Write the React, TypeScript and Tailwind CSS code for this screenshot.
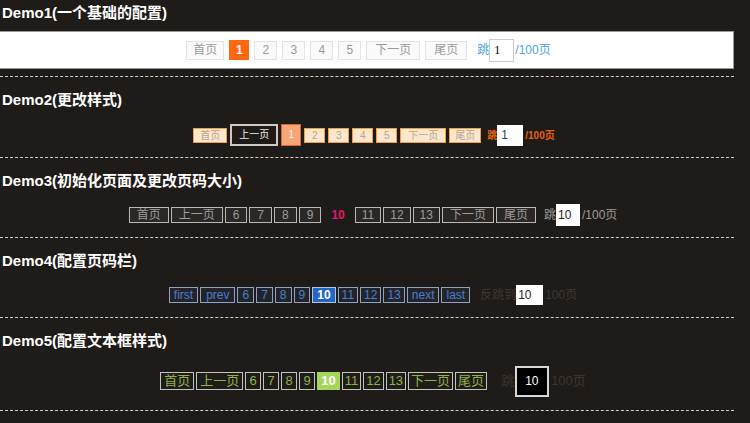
import React from 'react';

const nums1 = ['2', '3', '4', '5'];
const nums3 = ['6', '7', '8', '9'];
const nums3b = ['11', '12', '13'];

function Title({ children }: { children: React.ReactNode }) {
  return <h2 className="h-[20px] leading-[20px] pl-[2px] text-[15px] font-bold text-white">{children}</h2>;
}

export default function App() {
  return (
    <div className="min-h-screen bg-[#1f1b18] font-['Liberation_Sans','Noto_Sans_CJK_SC',sans-serif]">
      <div className="w-[734px]">
        {/* Demo1 */}
        <section className="pt-[3px] pb-[7px] border-b border-dashed border-[#cfcfcf]">
          <Title>Demo1(一个基础的配置)</Title>
          <div className="mt-[8px] h-[38px] bg-white border border-[#9a9a9a] border-l-0 flex items-center justify-center text-[12px] text-[#9a9a9a]">
            <div className="flex items-center gap-[5px] pl-[4px]">
              <span className="h-[19px] leading-[17px] px-[6px] border border-[#e4e4e4] bg-[#fafafa]">首页</span>
              <span className="h-[20px] leading-[20px] w-[20px] text-center bg-[#ff660f] text-white font-bold">1</span>
              {nums1.map((n) => (
                <span key={n} className="h-[19px] leading-[17px] w-[23px] text-center border border-[#e4e4e4] bg-[#fafafa]">{n}</span>
              ))}
              <span className="h-[19px] leading-[17px] px-[8px] border border-[#e4e4e4] bg-[#fafafa]">下一页</span>
              <span className="h-[19px] leading-[17px] px-[8px] border border-[#e4e4e4] bg-[#fafafa]">尾页</span>
              <div className="ml-[5px] flex items-center text-[#4ba5dc]">
                <span>跳</span>
                <span className="h-[23px] w-[25px] border border-[#cccccc] bg-white pl-[4px] leading-[21px] text-[12px] text-black font-['Liberation_Serif',serif]">1</span>
                <span className="ml-[1px]">/100页</span>
              </div>
            </div>
          </div>
        </section>

        {/* Demo2 */}
        <section className="pt-[13px] pb-[11px] border-b border-dashed border-[#cfcfcf]">
          <Title>Demo2(更改样式)</Title>
          <div className="mt-[14px] h-[22px] pl-[14px] flex items-center justify-center text-[10px]">
            <div className="flex items-center gap-[3px]">
              <span className="h-[15px] leading-[13px] px-[6px] border border-[#f1a04a] bg-[#fde6c9] text-[#b3a597]">首页</span>
              <span className="h-[22px] leading-[18px] px-[7px] border-2 border-[#cfcac4] bg-[#1f1b18] text-[#f0ece8]">上一页</span>
              <span className="h-[22px] leading-[20px] w-[20px] text-center border border-[#d9672c] bg-[#f7a67a] text-[#fff3ea]">1</span>
              {nums1.map((n) => (
                <span key={n} className="h-[15px] leading-[13px] w-[21px] text-center border border-[#f1a04a] bg-[#fde6c9] text-[#b3a597]">{n}</span>
              ))}
              <span className="h-[15px] leading-[13px] px-[7px] border border-[#f1a04a] bg-[#fde6c9] text-[#b3a597]">下一页</span>
              <span className="h-[15px] leading-[13px] px-[5px] border border-[#f1a04a] bg-[#fde6c9] text-[#b3a597]">尾页</span>
              <div className="ml-[3px] flex items-center text-[#e8620f] font-bold">
                <span>跳</span>
                <span className="h-[21px] w-[26px] bg-white pl-[4px] leading-[21px] text-[12px] font-normal text-[#333d55]">1</span>
                <span className="ml-[2px] text-[10px]">/100页</span>
              </div>
            </div>
          </div>
        </section>

        {/* Demo3 */}
        <section className="pt-[13px] pb-[11px] border-b border-dashed border-[#cfcfcf]">
          <Title>Demo3(初始化页面及更改页码大小)</Title>
          <div className="mt-[13px] h-[22px] pl-[12px] flex items-center justify-center text-[12px] text-[#9c9c9c]">
            <div className="flex items-center gap-[2px]">
              <span className="h-[16px] leading-[14px] px-[7px] border border-[#b9b9b9] bg-[#2a2725]">首页</span>
              <span className="h-[16px] leading-[14px] px-[7px] border border-[#b9b9b9] bg-[#2a2725]">上一页</span>
              {nums3.map((n) => (
                <span key={n} className="h-[16px] leading-[14px] px-[7px] border border-[#b9b9b9] bg-[#2a2725]">{n}</span>
              ))}
              <span className="px-[8px] font-bold text-[#e5176f]">10</span>
              {nums3b.map((n) => (
                <span key={n} className="h-[16px] leading-[14px] px-[6px] border border-[#b9b9b9] bg-[#2a2725]">{n}</span>
              ))}
              <span className="h-[16px] leading-[14px] px-[7px] border border-[#b9b9b9] bg-[#2a2725]">下一页</span>
              <span className="h-[16px] leading-[14px] px-[7px] border border-[#b9b9b9] bg-[#2a2725]">尾页</span>
              <div className="ml-[6px] flex items-center">
                <span>跳</span>
                <span className="h-[22px] w-[24px] bg-white pl-[2px] leading-[22px] text-[12px] text-[#222]">10</span>
                <span className="ml-[2px]">/100页</span>
              </div>
            </div>
          </div>
        </section>

        {/* Demo4 */}
        <section className="pt-[13px] pb-[12px] border-b border-dashed border-[#cfcfcf]">
          <Title>Demo4(配置页码栏)</Title>
          <div className="mt-[14px] h-[20px] pl-[12px] flex items-center justify-center text-[12px] text-[#4a7ed0]">
            <div className="flex items-center gap-[2px]">
              <span className="h-[16px] leading-[14px] px-[4px] border border-[#8fa2c4] bg-[#22242a]">first</span>
              <span className="h-[16px] leading-[14px] px-[5px] border border-[#8fa2c4] bg-[#22242a]">prev</span>
              {nums3.map((n) => (
                <span key={n} className="h-[16px] leading-[14px] px-[4px] border border-[#8fa2c4] bg-[#22242a]">{n}</span>
              ))}
              <span className="h-[16px] leading-[14px] px-[4px] border border-[#b6c4de] bg-[#2466c8] text-white font-bold">10</span>
              {nums3b.map((n) => (
                <span key={n} className="h-[16px] leading-[14px] px-[3px] border border-[#8fa2c4] bg-[#22242a]">{n}</span>
              ))}
              <span className="h-[16px] leading-[14px] px-[4px] border border-[#8fa2c4] bg-[#22242a]">next</span>
              <span className="h-[16px] leading-[14px] px-[4px] border border-[#8fa2c4] bg-[#22242a]">last</span>
              <div className="ml-[8px] flex items-center text-[#3d3834]">
                <span>反跳到</span>
                <span className="h-[20px] w-[27px] bg-white pl-[2px] leading-[20px] text-[12px] text-[#222]">10</span>
                <span className="ml-[2px]">100页</span>
              </div>
            </div>
          </div>
        </section>

        {/* Demo5 */}
        <section className="pt-[13px] pb-[13px] border-b border-dashed border-[#cfcfcf]">
          <Title>Demo5(配置文本框样式)</Title>
          <div className="mt-[14px] h-[32px] pl-[12px] flex items-center justify-center text-[13px] text-[#93b04d]">
            <div className="flex items-center gap-[2px]">
              <span className="h-[18px] leading-[16px] px-[3px] border border-[#c2c2c2] bg-[#1f1d18]">首页</span>
              <span className="h-[18px] leading-[16px] px-[3px] border border-[#c2c2c2] bg-[#1f1d18]">上一页</span>
              {nums3.map((n) => (
                <span key={n} className="h-[18px] leading-[16px] min-w-[16px] px-[3px] text-center border border-[#c2c2c2] bg-[#1f1d18]">{n}</span>
              ))}
              <span className="h-[18px] leading-[18px] px-[4px] bg-[#a5d65b] text-white font-bold">10</span>
              {nums3b.map((n) => (
                <span key={n} className="h-[18px] leading-[16px] px-[2px] border border-[#c2c2c2] bg-[#1f1d18]">{n}</span>
              ))}
              <span className="h-[18px] leading-[16px] px-[2px] border border-[#c2c2c2] bg-[#1f1d18]">下一页</span>
              <span className="h-[18px] leading-[16px] px-[2px] border border-[#c2c2c2] bg-[#1f1d18]">尾页</span>
              <div className="ml-[12px] flex items-center text-[#3a3531]">
                <span>跳</span>
                <span className="ml-[1px] h-[31px] w-[34px] border-2 border-[#d8d8d8] bg-black pl-[8px] leading-[27px] text-[12px] text-white">10</span>
                <span className="ml-[2px]">100页</span>
              </div>
            </div>
          </div>
        </section>
      </div>
    </div>
  );
}
